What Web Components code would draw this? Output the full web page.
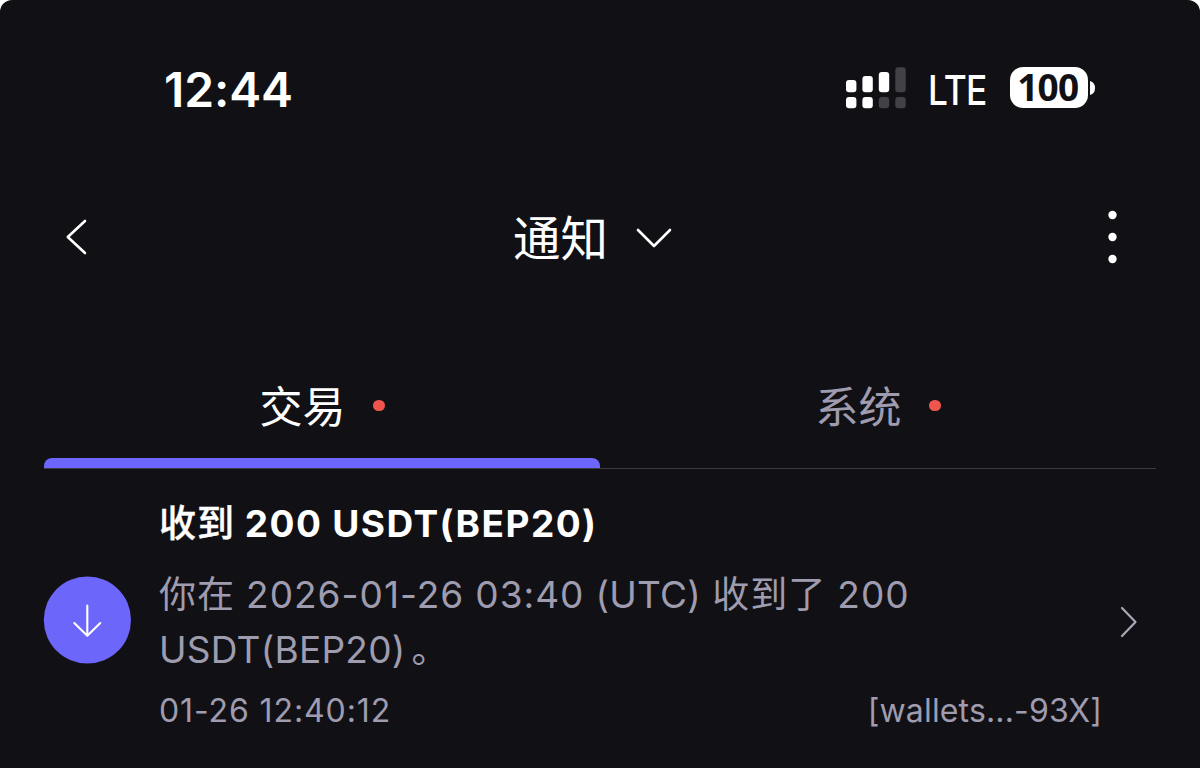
<!DOCTYPE html>
<html lang="zh-CN">
<head>
<meta charset="utf-8">
<title>通知</title>
<style>
html,body{margin:0;background:#fff}
body{width:1200px;height:768px;overflow:hidden;font-family:Inter,"Noto Sans CJK SC",sans-serif}
</style>
</head>
<body>
<notification-screen></notification-screen>
<script>
const define=(name,html)=>customElements.define(name,class extends HTMLElement{
  constructor(){super();this.attachShadow({mode:'open'}).innerHTML=html;}
});

define('signal-bars',`<style>:host{display:block;width:60px;height:42px}svg{display:block}</style>
<svg width="60" height="42" viewBox="0 0 60 42"><g fill="#fff">
<rect x="0" y="13" width="10.4" height="12.3" rx="3"/><rect x="16.4" y="9" width="10.4" height="16.3" rx="3"/><rect x="32.8" y="5" width="10.4" height="20.3" rx="3"/>
<rect x="0" y="30" width="10.4" height="11.3" rx="3"/><rect x="16.4" y="30" width="10.4" height="11.3" rx="3"/></g>
<g fill="#424246"><rect x="49.3" y="0.3" width="10.4" height="25" rx="3"/><rect x="32.8" y="30" width="10.4" height="11.3" rx="3"/><rect x="49.3" y="30" width="10.4" height="11.3" rx="3"/></g></svg>`);

define('battery-level',`<style>:host{display:flex;align-items:center;gap:2.5px;height:41px}
.cell{width:77.5px;height:41px;border-radius:13px;background:#fff;color:#111115;font-family:"Noto Sans",sans-serif;font-weight:700;font-size:37px;line-height:39px;text-align:center;letter-spacing:-.8px;text-indent:-2px}
svg{display:block}</style><div class="cell"><slot></slot></div>
<svg width="5" height="14" viewBox="0 0 5 14"><path d="M0 0Q5 1.5 5 7Q5 12.5 0 14Z" fill="#fff"/></svg>`);

define('status-bar',`<style>:host{display:flex;box-sizing:border-box;height:130px;padding:67px 105px 0 164px;color:#fff;align-items:flex-start}
.time{font-size:48px;font-weight:600;line-height:45px;letter-spacing:-.1px;flex:1}
.net{font-size:41px;font-weight:500;line-height:46px;margin:0 24px 0 22px;width:58px;letter-spacing:-1px;white-space:nowrap;transform:scaleX(.86);transform-origin:0 50%}</style>
<div class="time">12:44</div><signal-bars></signal-bars><div class="net">LTE</div><battery-level>100</battery-level>`);

define('nav-bar',`<style>:host{display:flex;box-sizing:border-box;height:214px;padding:0 80px 0 64px;color:#fff;align-items:center;justify-content:space-between}
svg{display:block;flex:none}.title{display:flex;align-items:center;gap:28px;margin-right:8px}
.t{font-size:47.5px;font-weight:400;line-height:60px;padding-top:3px}.title svg{margin-top:2px}</style>
<svg width="24" height="40" viewBox="0 0 24 40"><path d="M21 4L3.8 20L21 36" fill="none" stroke="#fff" stroke-width="2.6" stroke-linecap="round" stroke-linejoin="round"/></svg>
<div class="title"><span class="t"><slot></slot></span><svg width="36" height="22" viewBox="0 0 36 22"><path d="M2 3L18 19L34 3" fill="none" stroke="#fff" stroke-width="2.6" stroke-linecap="round" stroke-linejoin="round"/></svg></div>
<svg width="15" height="56" viewBox="0 0 15 56"><g fill="#fff"><circle cx="7.5" cy="6" r="4.2"/><circle cx="7.5" cy="28" r="4.2"/><circle cx="7.5" cy="50" r="4.2"/></g></svg>`);

define('tab-item',`<style>:host{flex:1;display:flex;flex-direction:column;color:#9f9cb0}
:host([active]){color:#fff}
.label{box-sizing:border-box;padding-top:11px;height:114px;display:flex;align-items:center;justify-content:center;gap:27.5px;font-size:43px;line-height:60px}
.dot{width:11.5px;height:11.5px;border-radius:50%;background:#ef554d;margin-bottom:2px}
.bar{height:10px;border-radius:8px 8px 0 0}:host([active]) .bar{background:#6c66fa}</style>
<div class="label"><span><slot></slot></span><i class="dot"></i></div><div class="bar"></div>`);

define('tab-strip',`<style>:host{display:flex;margin:0 44px;height:124px;border-bottom:1px solid #3a3a42}</style><slot></slot>`);

define('notice-row',`<style>:host{display:flex;margin:0 61px 0 43px;height:299px;align-items:flex-start;color:#9f9cb0}
.ic{margin-top:107px;width:88px;height:88px;flex:none;display:block}
.main{margin-left:28px;width:944px;padding-top:30px}
.h{font-size:37px;font-weight:700;line-height:50px;color:#fff;letter-spacing:1.45px;word-spacing:-.4px;white-space:nowrap}
.b{font-size:37px;line-height:55px;margin-top:18px;letter-spacing:1px;word-spacing:-.3px;white-space:nowrap}
.f{display:flex;justify-content:space-between;font-size:32px;line-height:40px;margin-top:14px;letter-spacing:.9px}
.go{margin:136px 0 0 17px;flex:none}
::slotted([slot=wallet]){letter-spacing:.15px}</style>
<svg class="ic" viewBox="0 0 88 88"><circle cx="44.4" cy="44" r="43.6" fill="#6c66fa"/><path d="M44.3 29.5V59.5M31.3 47L44.3 59.8L57.3 47" fill="none" stroke="#fff" stroke-width="2.1" stroke-linecap="round" stroke-linejoin="round"/></svg>
<div class="main"><div class="h"><slot name="title"></slot></div><div class="b"><slot name="body"></slot></div>
<div class="f"><slot name="time"></slot><slot name="wallet"></slot></div></div>
<svg class="go" width="20" height="34" viewBox="0 0 20 34"><path d="M3 3L16.5 17L3 31" fill="none" stroke="#aaa7b8" stroke-width="2.2" stroke-linecap="round" stroke-linejoin="round"/></svg>`);

define('notification-screen',`<style>:host{display:block;width:1200px;height:768px;overflow:hidden;background:#111115;border-radius:12px 12px 0 0}
.cjk{font-weight:500;letter-spacing:1px;-webkit-text-stroke:.4px #fff}.caps{letter-spacing:.25px}.stop{margin-left:6px}</style>
<status-bar></status-bar>
<nav-bar>通知</nav-bar>
<tab-strip><tab-item active>交易</tab-item><tab-item>系统</tab-item></tab-strip>
<notice-row><span slot="title"><span class="cjk">收到</span> 200 USDT(BEP20)</span><span slot="body">你在 2026-01-26 03:40 <span class="caps">(UTC)</span> 收到了 200<br><span class="caps">USDT(BEP20)</span><span class="stop">。</span></span><span slot="time">01-26 12:40:12</span><span slot="wallet">[wallets...-93X]</span></notice-row>`);
</script>
</body>
</html>
